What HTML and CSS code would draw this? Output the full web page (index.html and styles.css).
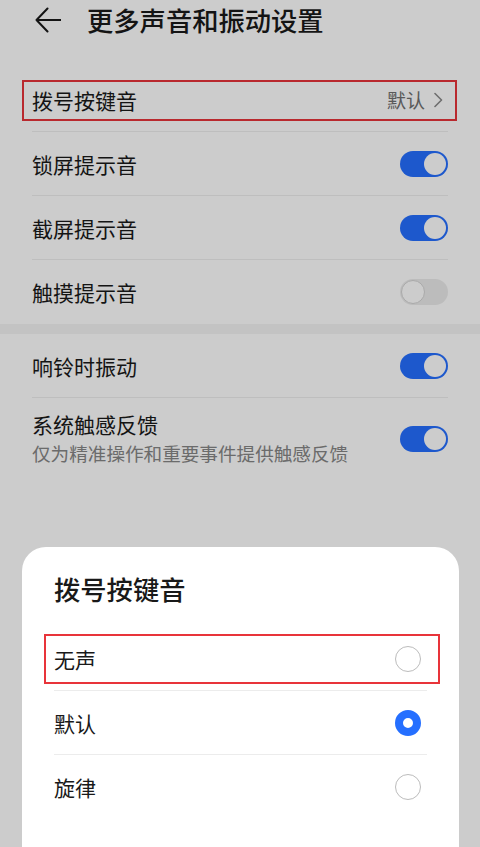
FILE: index.html
```html
<!DOCTYPE html>
<html lang="zh-CN">
<head>
<meta charset="utf-8">
<title>更多声音和振动设置</title>
<link rel="stylesheet" href="styles.css">
</head>
<body>
<div class="page">
  <header class="header">
    <svg class="back" width="26" height="26" viewBox="0 0 26 26" aria-hidden="true">
      <path d="M12.5 1.5 L1.5 13 L12.5 24.5 M1.5 13 H25.5" fill="none" stroke="#191919" stroke-width="2" stroke-linecap="round" stroke-linejoin="round"/>
    </svg>
    <h1 class="title">更多声音和振动设置</h1>
  </header>

  <section class="group first">
    <div class="row">
      <span class="label">拨号按键音</span>
      <span class="value">默认
        <svg class="chev" width="9" height="16" viewBox="0 0 9 16" aria-hidden="true"><path d="M1 1.5 L7.5 8 L1 14.5" fill="none" stroke="#8a8a8a" stroke-width="1.6" stroke-linecap="round" stroke-linejoin="round"/></svg>
      </span>
      <span class="mark mark-top"></span>
    </div>
    <div class="row">
      <span class="label">锁屏提示音</span>
      <span class="switch on"><span class="knob"></span></span>
    </div>
    <div class="row">
      <span class="label">截屏提示音</span>
      <span class="switch on"><span class="knob"></span></span>
    </div>
    <div class="row last">
      <span class="label">触摸提示音</span>
      <span class="switch off"><span class="knob"></span></span>
    </div>
  </section>

  <div class="band"></div>

  <section class="group">
    <div class="row">
      <span class="label">响铃时振动</span>
      <span class="switch on"><span class="knob"></span></span>
    </div>
    <div class="row tall last">
      <div class="texts">
        <span class="label">系统触感反馈</span>
        <span class="sub">仅为精准操作和重要事件提供触感反馈</span>
      </div>
      <span class="switch on"><span class="knob"></span></span>
    </div>
  </section>
</div>

<div class="scrim"></div>

<div class="sheet">
  <h2 class="sheet-title">拨号按键音</h2>
  <div class="options">
    <div class="opt">
      <span class="opt-label">无声</span>
      <span class="radio"></span>
      <span class="mark mark-opt"></span>
    </div>
    <div class="opt">
      <span class="opt-label">默认</span>
      <span class="radio checked"></span>
    </div>
    <div class="opt last">
      <span class="opt-label">旋律</span>
      <span class="radio"></span>
    </div>
  </div>
</div>
</body>
</html>
```
FILE: styles.css
```css
* { box-sizing: border-box; }

html, body {
  margin: 0;
  padding: 0;
}

body {
  width: 480px;
  height: 847px;
  overflow: hidden;
  background: #ffffff;
  font-family: "Noto Sans CJK SC", "Noto Sans", sans-serif;
  color: #1a1a1a;
}

.page {
  background: #ffffff;
}

.header {
  height: 40px;
  display: flex;
  align-items: center;
  padding-left: 35px;
  gap: 26px;
}

.back { display: block; }

.title {
  margin: 0;
  font-size: 26.3px;
  font-weight: 500;
  line-height: 34px;
  color: #191919;
}

.group.first { margin-top: 28px; }

.row {
  position: relative;
  display: flex;
  align-items: center;
  justify-content: space-between;
  height: 64px;
  margin: 0 32px;
  border-bottom: 1px solid #eeeeee;
}

.row.last { border-bottom: none; }

.row.tall {
  height: auto;
  padding: 13px 0 14px;
}

.label {
  font-size: 21px;
  line-height: 26px;
  color: #191919;
}

.texts {
  display: flex;
  flex-direction: column;
  gap: 3px;
}

.sub {
  font-size: 18.6px;
  line-height: 26px;
  color: #868686;
}

.value {
  display: flex;
  align-items: center;
  gap: 9px;
  font-size: 19px;
  color: #707070;
  padding-right: 5px;
}

.chev { display: block; }

.band {
  height: 10px;
  background: #f4f4f4;
}

.switch {
  display: flex;
  align-items: center;
  width: 48px;
  height: 26px;
  border-radius: 13px;
  padding: 2px;
  flex-shrink: 0;
}

.switch.on {
  background: #256fff;
  justify-content: flex-end;
}

.switch.off {
  background: #ececec;
  justify-content: flex-start;
  padding: 1px;
}

.knob {
  width: 22px;
  height: 22px;
  border-radius: 50%;
  background: #ffffff;
}

.switch.off .knob {
  width: 24px;
  height: 24px;
  border: 1.5px solid #d4d4d4;
}

.mark {
  position: absolute;
  border: 2px solid #e8343a;
  pointer-events: none;
}

.mark-top {
  left: -10px;
  right: -9px;
  top: 12px;
  height: 41px;
}

.scrim {
  position: fixed;
  inset: 0;
  background: rgba(0, 0, 0, 0.2);
}

.sheet {
  position: fixed;
  left: 22px;
  width: 437px;
  top: 547px;
  bottom: 0;
  background: #ffffff;
  border-radius: 24px 24px 0 0;
  padding: 26px 32px 0;
}

.sheet-title {
  margin: 0;
  font-size: 26.3px;
  font-weight: 500;
  line-height: 32px;
  color: #191919;
}

.options { margin-top: 22px; }

.opt {
  position: relative;
  display: flex;
  align-items: center;
  justify-content: space-between;
  height: 64px;
  padding-right: 6px;
  border-bottom: 1px solid #ececec;
}

.opt.last { border-bottom: none; }

.opt-label {
  font-size: 21px;
  line-height: 26px;
  color: #191919;
}

.radio {
  width: 26px;
  height: 26px;
  border-radius: 50%;
  border: 1.5px solid #bcbcbc;
  flex-shrink: 0;
}

.radio.checked {
  border: 8px solid #256fff;
}

.mark-opt {
  left: -10px;
  right: -13px;
  top: 7px;
  height: 50px;
}
```
